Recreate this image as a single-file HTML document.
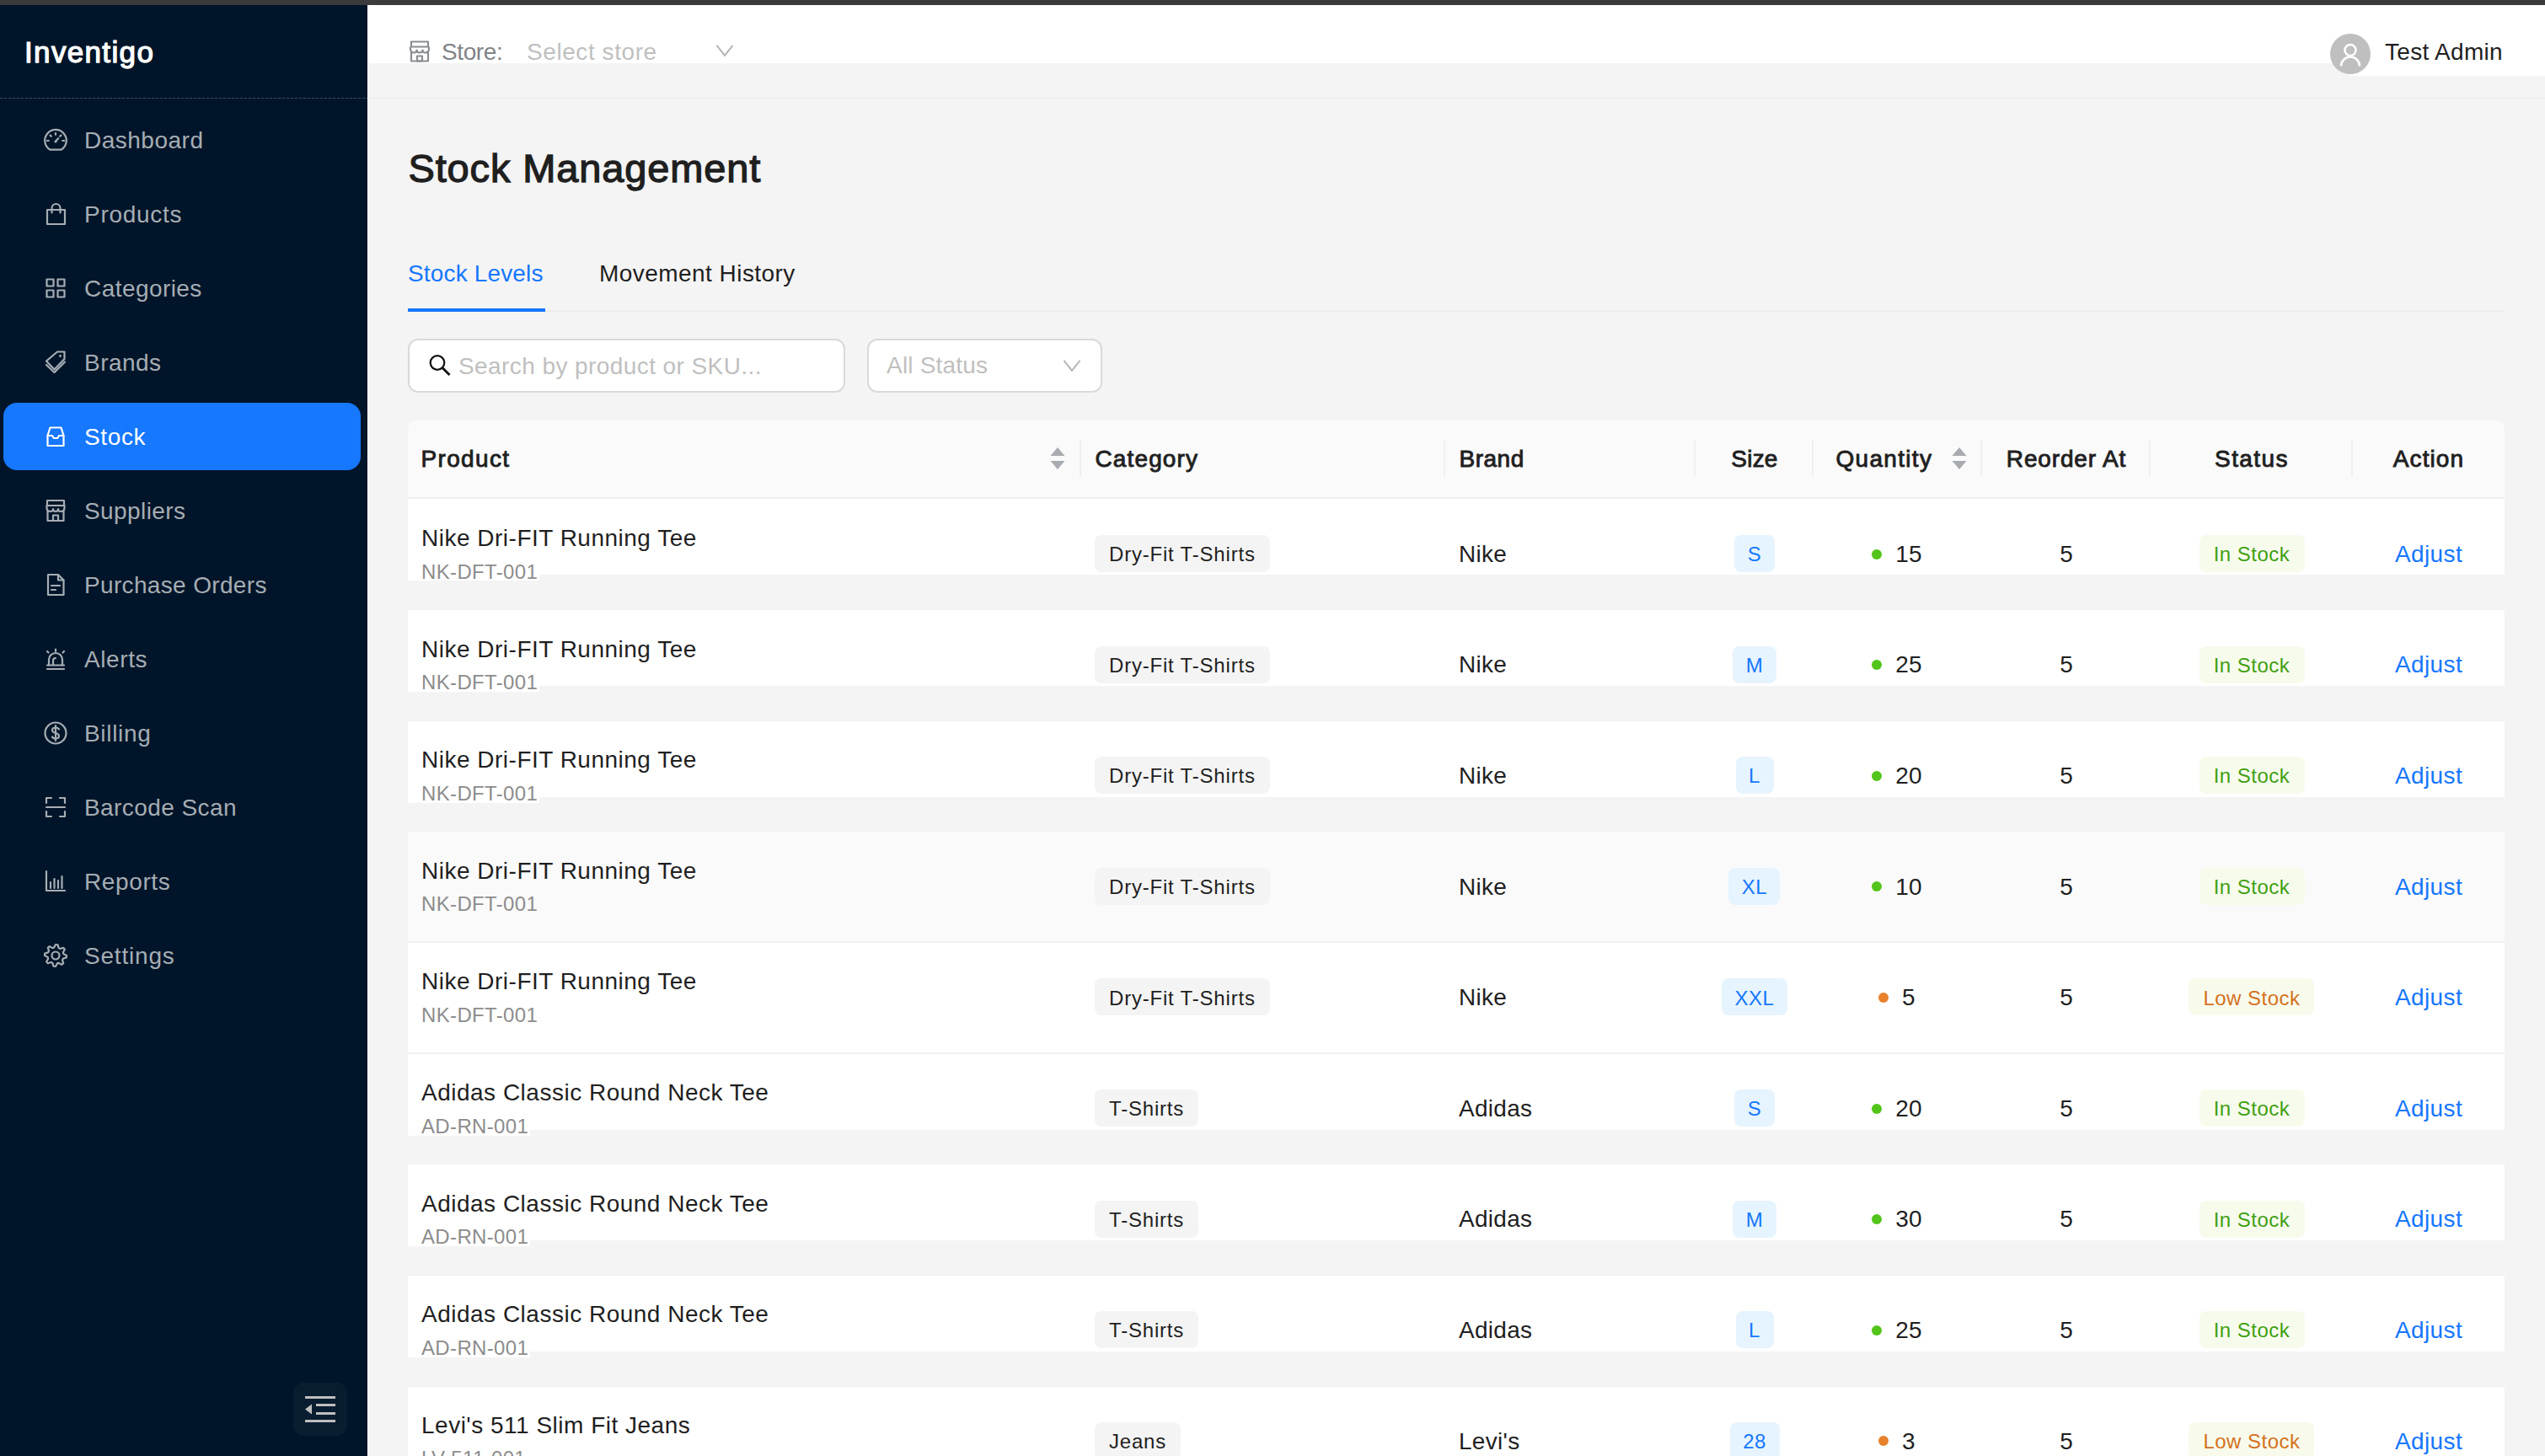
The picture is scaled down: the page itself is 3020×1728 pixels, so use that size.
<!DOCTYPE html>
<html><head><meta charset="utf-8"><title>Inventigo - Stock Management</title>
<style>
html,body{margin:0;padding:0;}
body{width:3020px;height:1728px;overflow:hidden;position:relative;background:#f4f4f4;font-family:"Liberation Sans", sans-serif;}
.t{position:absolute;white-space:nowrap;}
.b{position:absolute;}
.s{position:absolute;overflow:visible;}
</style></head>
<body>
<div class="b" style="left:0px;top:0px;width:3020px;height:6px;background:#3b3b3d;"></div>
<div class="b" style="left:0px;top:6px;width:436px;height:1722px;background:#001529;"></div>
<div class="b" style="left:436px;top:6px;width:1px;height:1722px;background:#ffffff;"></div>
<div class="b" style="left:437px;top:6px;width:2583px;height:69px;background:#ffffff;"></div>
<div class="b" style="left:2788px;top:75px;width:232px;height:15px;background:#ffffff;"></div>
<div class="b" style="left:437px;top:116px;width:2583px;height:1px;background:#ebebeb;"></div>
<div class="b" style="left:0px;top:116px;width:436px;height:1px;background:repeating-linear-gradient(90deg,#3c4756 0 3px,#142234 3px 5px);"></div>
<div class="t " style="left:29px;top:43.97px;font-size:35px;line-height:35px;color:#ffffff;letter-spacing:1.35px;-webkit-text-stroke:1.25px #ffffff;">Inventigo</div>
<div class="b" style="left:4px;top:478px;width:424px;height:80px;background:#1677ff;border-radius:16px;"></div>
<svg class="s" style="left:50px;top:150px;" width="32" height="32" viewBox="0 0 32 32"><path fill="none" stroke="#a6adb4" stroke-width="2.2" stroke-linecap="round" stroke-linejoin="round" d="M9.2 27.6 A12.8 12.8 0 1 1 22.8 27.6 Z"/><path fill="none" stroke="#a6adb4" stroke-width="2.2" stroke-linecap="round" stroke-linejoin="round" d="M16 8.2v1.6M5.8 17h2M24.2 17h2M9.6 10.6l1.2 1.2M22.4 10.6l-1.2 1.2M16 17.8l3.2-3.6"/><circle cx="16" cy="18" r="1.6" fill="#a6adb4"/></svg>
<div class="t " style="left:100px;top:152.80px;font-size:28px;line-height:28px;color:#a6adb4;letter-spacing:0.5px;">Dashboard</div>
<svg class="s" style="left:50px;top:238px;" width="32" height="32" viewBox="0 0 32 32"><rect fill="none" stroke="#a6adb4" stroke-width="2.2" stroke-linecap="round" stroke-linejoin="round" x="6" y="11" width="21" height="17"/><path fill="none" stroke="#a6adb4" stroke-width="2.2" stroke-linecap="round" stroke-linejoin="round" d="M11.5 14.5V9a5 5 0 0 1 10 0v5.5"/></svg>
<div class="t " style="left:100px;top:240.80px;font-size:28px;line-height:28px;color:#a6adb4;letter-spacing:0.71px;">Products</div>
<svg class="s" style="left:50px;top:326px;" width="32" height="32" viewBox="0 0 32 32"><rect fill="none" stroke="#a6adb4" stroke-width="2.2" stroke-linecap="round" stroke-linejoin="round" x="5.5" y="5.5" width="8" height="8"/><rect fill="none" stroke="#a6adb4" stroke-width="2.2" stroke-linecap="round" stroke-linejoin="round" x="5.5" y="18.5" width="8" height="8"/><rect fill="none" stroke="#a6adb4" stroke-width="2.2" stroke-linecap="round" stroke-linejoin="round" x="18.5" y="5.5" width="8" height="8"/><rect fill="none" stroke="#a6adb4" stroke-width="2.2" stroke-linecap="round" stroke-linejoin="round" x="18.5" y="18.5" width="8" height="8"/></svg>
<div class="t " style="left:100px;top:328.80px;font-size:28px;line-height:28px;color:#a6adb4;letter-spacing:0.44px;">Categories</div>
<svg class="s" style="left:50px;top:414px;" width="32" height="32" viewBox="0 0 32 32"><path fill="none" stroke="#a6adb4" stroke-width="2.2" stroke-linecap="round" stroke-linejoin="round" d="M5 14.5 L18 3.5 L26.5 3.5 L26.5 12 L14.5 24.5 Z"/><path fill="none" stroke="#a6adb4" stroke-width="2.2" stroke-linecap="round" stroke-linejoin="round" d="M5 19 L14.5 28 L27 15.5"/><circle cx="21.5" cy="8.5" r="1.4" fill="#a6adb4"/></svg>
<div class="t " style="left:100px;top:416.80px;font-size:28px;line-height:28px;color:#a6adb4;letter-spacing:0.48px;">Brands</div>
<svg class="s" style="left:50px;top:502px;" width="32" height="32" viewBox="0 0 32 32"><path fill="none" stroke="#ffffff" stroke-width="2.2" stroke-linecap="round" stroke-linejoin="round" d="M6.5 15 L9.5 5.5 H22.5 L25.5 15 V27 H6.5 Z"/><path fill="none" stroke="#ffffff" stroke-width="2.2" stroke-linecap="round" stroke-linejoin="round" d="M6.5 15 H12 L13.8 18 H18.2 L20 15 H25.5"/></svg>
<div class="t " style="left:100px;top:504.80px;font-size:28px;line-height:28px;color:#ffffff;letter-spacing:0.62px;">Stock</div>
<svg class="s" style="left:50px;top:590px;" width="32" height="32" viewBox="0 0 32 32"><rect fill="none" stroke="#a6adb4" stroke-width="2.2" stroke-linecap="round" stroke-linejoin="round" x="6" y="4" width="20" height="6"/><path fill="none" stroke="#a6adb4" stroke-width="2.2" stroke-linecap="round" stroke-linejoin="round" d="M5.5 10 V12.5 Q5.5 17 10 17 Q13 17 13 14 Q13 17 16 17 Q19 17 19 14 Q19 17 22 17 Q26.5 17 26.5 12.5 V10"/><path fill="none" stroke="#a6adb4" stroke-width="2.2" stroke-linecap="round" stroke-linejoin="round" d="M6.5 16.5 V28 H25.5 V16.5"/><rect fill="none" stroke="#a6adb4" stroke-width="2.2" stroke-linecap="round" stroke-linejoin="round" x="13" y="21.5" width="6" height="6.5"/></svg>
<div class="t " style="left:100px;top:592.80px;font-size:28px;line-height:28px;color:#a6adb4;letter-spacing:0.41px;">Suppliers</div>
<svg class="s" style="left:50px;top:678px;" width="32" height="32" viewBox="0 0 32 32"><path fill="none" stroke="#a6adb4" stroke-width="2.2" stroke-linecap="round" stroke-linejoin="round" d="M7 4 H19 L25.5 10.5 V28 H7 Z"/><path fill="none" stroke="#a6adb4" stroke-width="2.2" stroke-linecap="round" stroke-linejoin="round" d="M19 4 V10.5 H25.5"/><path fill="none" stroke="#a6adb4" stroke-width="2.2" stroke-linecap="round" stroke-linejoin="round" d="M11 17 H21 M11 22 H16"/></svg>
<div class="t " style="left:100px;top:680.80px;font-size:28px;line-height:28px;color:#a6adb4;letter-spacing:0.34px;">Purchase Orders</div>
<svg class="s" style="left:50px;top:766px;" width="32" height="32" viewBox="0 0 32 32"><path fill="none" stroke="#a6adb4" stroke-width="2.2" stroke-linecap="round" stroke-linejoin="round" d="M8 23.5 V17 a8 8 0 0 1 16 0 V23.5"/><path fill="none" stroke="#a6adb4" stroke-width="2.2" stroke-linecap="round" stroke-linejoin="round" d="M6 28 H26 M6 23.5 H26"/><path fill="none" stroke="#a6adb4" stroke-width="2.2" stroke-linecap="round" stroke-linejoin="round" d="M16 4.5 V7 M6 7 l1.5 1.5 M26 7 l-1.5 1.5 M13 23 v-5 a3 3 0 0 1 3-3"/></svg>
<div class="t " style="left:100px;top:768.80px;font-size:28px;line-height:28px;color:#a6adb4;letter-spacing:0.6px;">Alerts</div>
<svg class="s" style="left:50px;top:854px;" width="32" height="32" viewBox="0 0 32 32"><circle fill="none" stroke="#a6adb4" stroke-width="2.2" stroke-linecap="round" stroke-linejoin="round" cx="16" cy="16" r="12.5"/><path fill="none" stroke="#a6adb4" stroke-width="2.2" stroke-linecap="round" stroke-linejoin="round" d="M20 11.5 Q19 9.5 16 9.5 Q12 9.5 12 12.5 Q12 15 16 16 Q20 17 20 19.5 Q20 22.5 16 22.5 Q13 22.5 12 20.5 M16 7 V25"/></svg>
<div class="t " style="left:100px;top:856.80px;font-size:28px;line-height:28px;color:#a6adb4;letter-spacing:0.67px;">Billing</div>
<svg class="s" style="left:50px;top:942px;" width="32" height="32" viewBox="0 0 32 32"><path fill="none" stroke="#a6adb4" stroke-width="2.2" stroke-linecap="round" stroke-linejoin="round" d="M5 11 V5 H11 M21 5 H27 V11 M27 21 V27 H21 M11 27 H5 V21 M5 16 H27"/></svg>
<div class="t " style="left:100px;top:944.80px;font-size:28px;line-height:28px;color:#a6adb4;letter-spacing:0.43px;">Barcode Scan</div>
<svg class="s" style="left:50px;top:1030px;" width="32" height="32" viewBox="0 0 32 32"><path fill="none" stroke="#a6adb4" stroke-width="2.2" stroke-linecap="round" stroke-linejoin="round" d="M5 4 V27 H27"/><path fill="none" stroke="#a6adb4" stroke-width="2.2" stroke-linecap="round" stroke-linejoin="round" stroke-width="2.6" d="M10 24 V17 M14.5 24 V13 M19 24 V15 M23.5 24 V10"/></svg>
<div class="t " style="left:100px;top:1032.80px;font-size:28px;line-height:28px;color:#a6adb4;letter-spacing:0.62px;">Reports</div>
<svg class="s" style="left:50px;top:1118px;" width="32" height="32" viewBox="0 0 32 32"><polygon fill="none" stroke="#a6adb4" stroke-width="2.2" stroke-linecap="round" stroke-linejoin="round" points="16.00,3.00 18.54,3.25 19.67,7.13 21.33,8.02 25.19,6.81 26.81,8.78 24.87,12.33 25.42,14.13 29.00,16.00 28.75,18.54 24.87,19.67 23.98,21.33 25.19,25.19 23.22,26.81 19.67,24.87 17.87,25.42 16.00,29.00 13.46,28.75 12.33,24.87 10.67,23.98 6.81,25.19 5.19,23.22 7.13,19.67 6.58,17.87 3.00,16.00 3.25,13.46 7.13,12.33 8.02,10.67 6.81,6.81 8.78,5.19 12.33,7.13 14.13,6.58"/><circle fill="none" stroke="#a6adb4" stroke-width="2.2" stroke-linecap="round" stroke-linejoin="round" cx="16" cy="16" r="4.5"/></svg>
<div class="t " style="left:100px;top:1120.80px;font-size:28px;line-height:28px;color:#a6adb4;letter-spacing:0.8px;">Settings</div>
<div class="b" style="left:348px;top:1641px;width:64px;height:63px;background:rgba(255,255,255,0.035);border-radius:12px;"></div>
<svg class="s" style="left:362px;top:1656px;" width="36" height="33" viewBox="0 0 36 33"><path fill="#bfbfbf" d="M0 1h36v3H0zM13 10h23v3H13zM13 20h23v3H13zM0 29h36v3H0zM0 16.5 L8 10.5 V22.5 Z"/></svg>
<svg class="s" style="left:485px;top:48px;" width="26" height="26" viewBox="0 0 26 26"><g fill="none" stroke="#8a8d91" stroke-width="2.2" stroke-linejoin="round"><rect x="3" y="1.5" width="20" height="6"/><path d="M2 7.5 V10 Q2 14.5 6.5 14.5 Q9.5 14.5 9.5 11.5 Q9.5 14.5 13 14.5 Q16.5 14.5 16.5 11.5 Q16.5 14.5 19.5 14.5 Q24 14.5 24 10 V7.5"/><path d="M3 14 V24.5 H23 V14"/><rect x="10" y="18.5" width="6" height="6"/></g></svg>
<div class="t " style="left:524px;top:48.30px;font-size:28px;line-height:28px;color:#808387;letter-spacing:-0.4px;">Store:</div>
<div class="t " style="left:625px;top:47.80px;font-size:28px;line-height:28px;color:#bfbfbf;letter-spacing:0.57px;">Select store</div>
<svg class="s" style="left:849px;top:53px;" width="22" height="15" viewBox="0 0 22 15"><path fill="none" stroke="#b5b5b5" stroke-width="2" d="M1.5 0.8 L11 12.8 L20.5 0.8"/></svg>
<div class="b" style="left:2765px;top:40px;width:48px;height:48px;border-radius:50%;background:#bfbfbf;"></div>
<svg class="s" style="left:2765px;top:40px;" width="48" height="48" viewBox="0 0 48 48"><g fill="none" stroke="#fff" stroke-width="2.6"><circle cx="24" cy="19.5" r="6.5"/><path d="M13 38.5 a11 11 0 0 1 22 0"/></g></svg>
<div class="t " style="left:2830px;top:48.30px;font-size:28px;line-height:28px;color:#1f1f1f;letter-spacing:0.3px;">Test Admin</div>
<div class="t " style="left:484.5px;top:176.21px;font-size:47px;line-height:47px;color:#1f1f1f;letter-spacing:0.85px;-webkit-text-stroke:1.3px #1f1f1f;">Stock Management</div>
<div class="t " style="left:484px;top:310.50px;font-size:28px;line-height:28px;color:#1677ff;letter-spacing:0.15px;">Stock Levels</div>
<div class="t " style="left:711px;top:310.50px;font-size:28px;line-height:28px;color:#1f1f1f;letter-spacing:0.45px;">Movement History</div>
<div class="b" style="left:484px;top:368px;width:2488px;height:2px;background:#ededed;"></div>
<div class="b" style="left:484px;top:366px;width:163px;height:4px;background:#1677ff;"></div>
<div class="b" style="left:484px;top:402px;width:519px;height:64px;box-sizing:border-box;border:2px solid #d9d9d9;border-radius:12px;background:#fff;"></div>
<svg class="s" style="left:506px;top:418px;" width="32" height="32" viewBox="0 0 32 32"><g fill="none" stroke="#111" stroke-width="2.2"><circle cx="13" cy="12.5" r="8.3"/><path stroke-width="2.8" d="M19 18.5 L27.5 27"/></g></svg>
<div class="t " style="left:544px;top:420.80px;font-size:28px;line-height:28px;color:#bfbfbf;letter-spacing:0.42px;">Search by product or SKU...</div>
<div class="b" style="left:1029px;top:402px;width:279px;height:64px;box-sizing:border-box;border:2px solid #d9d9d9;border-radius:12px;background:#fff;"></div>
<div class="t " style="left:1052px;top:420.00px;font-size:28px;line-height:28px;color:#bfbfbf;letter-spacing:0.2px;">All Status</div>
<svg class="s" style="left:1261px;top:427px;" width="22" height="15" viewBox="0 0 22 15"><path fill="none" stroke="#b5b5b5" stroke-width="2" d="M1.5 0.8 L11 12.8 L20.5 0.8"/></svg>
<div class="b" style="left:484px;top:498px;width:2488px;height:92px;background:#fafafa;border-radius:12px 12px 0 0;"></div>
<div class="b" style="left:484px;top:590px;width:2488px;height:2px;background:#f0f0f0;"></div>
<div class="b" style="left:1281px;top:522px;width:2px;height:44px;background:#f0f0f0;"></div>
<div class="b" style="left:1713px;top:522px;width:2px;height:44px;background:#f0f0f0;"></div>
<div class="b" style="left:2010px;top:522px;width:2px;height:44px;background:#f0f0f0;"></div>
<div class="b" style="left:2150px;top:522px;width:2px;height:44px;background:#f0f0f0;"></div>
<div class="b" style="left:2350px;top:522px;width:2px;height:44px;background:#f0f0f0;"></div>
<div class="b" style="left:2550px;top:522px;width:2px;height:44px;background:#f0f0f0;"></div>
<div class="b" style="left:2790px;top:522px;width:2px;height:44px;background:#f0f0f0;"></div>
<div class="t " style="left:499.5px;top:531.30px;font-size:28px;line-height:28px;color:#1f1f1f;letter-spacing:1.35px;-webkit-text-stroke:0.9px #1f1f1f;">Product</div>
<div class="t " style="left:1299.5px;top:531.30px;font-size:28px;line-height:28px;color:#1f1f1f;letter-spacing:1.13px;-webkit-text-stroke:0.9px #1f1f1f;">Category</div>
<div class="t " style="left:1731.5px;top:531.30px;font-size:28px;line-height:28px;color:#1f1f1f;letter-spacing:0.5px;-webkit-text-stroke:0.9px #1f1f1f;">Brand</div>
<div class="t" style="left:1782px;width:600px;text-align:center;top:531.30px;font-size:28px;line-height:28px;color:#1f1f1f;letter-spacing:0.2px;-webkit-text-stroke:0.9px #1f1f1f;">Size</div>
<div class="t " style="left:2178.5px;top:531.30px;font-size:28px;line-height:28px;color:#1f1f1f;letter-spacing:1.3px;-webkit-text-stroke:0.9px #1f1f1f;">Quantity</div>
<div class="t" style="left:2152px;width:600px;text-align:center;top:531.30px;font-size:28px;line-height:28px;color:#1f1f1f;letter-spacing:0.85px;-webkit-text-stroke:0.9px #1f1f1f;">Reorder At</div>
<div class="t" style="left:2372px;width:600px;text-align:center;top:531.30px;font-size:28px;line-height:28px;color:#1f1f1f;letter-spacing:1.4px;-webkit-text-stroke:0.9px #1f1f1f;">Status</div>
<div class="t" style="left:2582px;width:600px;text-align:center;top:531.30px;font-size:28px;line-height:28px;color:#1f1f1f;letter-spacing:1.1px;-webkit-text-stroke:0.9px #1f1f1f;">Action</div>
<svg class="s" style="left:1246px;top:530px;" width="18" height="28" viewBox="0 0 18 28"><path fill="#a8abb0" d="M0.5 11 L9 1 L17.5 11 Z M0.5 17 L9 27 L17.5 17 Z"/></svg>
<svg class="s" style="left:2316px;top:530px;" width="18" height="28" viewBox="0 0 18 28"><path fill="#a8abb0" d="M0.5 11 L9 1 L17.5 11 Z M0.5 17 L9 27 L17.5 17 Z"/></svg>
<div class="b" style="left:484px;top:592px;width:2488px;height:90px;background:#ffffff;"></div>
<div class="b" style="left:484px;top:682px;width:2488px;height:42px;background:#f4f4f4;"></div>
<div class="b" style="left:484px;top:681px;width:156px;height:8px;background:#ffffff;"></div>
<div class="b" style="left:484px;top:723px;width:2488px;height:1px;background:#efefef;"></div>
<div class="t " style="left:500px;top:624.90px;font-size:28px;line-height:28px;color:#1f1f1f;letter-spacing:0.5px;">Nike Dri-FIT Running Tee</div>
<div class="t " style="left:500px;top:666.68px;font-size:24px;line-height:24px;color:#8c8c8c;letter-spacing:0.35px;">NK-DFT-001</div>
<div class="b" style="left:1299px;top:635px;width:208px;height:44px;background:#f4f4f4;border-radius:8px;"></div>
<div class="t " style="left:1316px;top:646.28px;font-size:24px;line-height:24px;color:#1f1f1f;letter-spacing:0.8px;">Dry-Fit T-Shirts</div>
<div class="t " style="left:1731px;top:643.80px;font-size:28px;line-height:28px;color:#1f1f1f;letter-spacing:0.3px;">Nike</div>
<div class="b" style="left:2058px;top:635px;width:48px;height:44px;background:#e6f4ff;border-radius:8px;"></div>
<div class="t" style="left:1782px;width:600px;text-align:center;top:646.28px;font-size:24px;line-height:24px;color:#1677ff;letter-spacing:0.5px;">S</div>
<div class="b" style="left:2221.2px;top:651.5px;width:12px;height:12px;border-radius:50%;background:#52c41a;"></div>
<div class="t " style="left:2249.2px;top:643.80px;font-size:28px;line-height:28px;color:#1f1f1f;letter-spacing:0.2px;">15</div>
<div class="t" style="left:2152px;width:600px;text-align:center;top:643.80px;font-size:28px;line-height:28px;color:#1f1f1f;">5</div>
<div class="b" style="left:2610px;top:635px;width:125px;height:44px;background:#f7fbec;border-radius:8px;"></div>
<div class="t" style="left:2372px;width:600px;text-align:center;top:646.28px;font-size:24px;line-height:24px;color:#3f9f12;letter-spacing:0.5px;">In Stock</div>
<div class="t" style="left:2582px;width:600px;text-align:center;top:643.80px;font-size:28px;line-height:28px;color:#1677ff;letter-spacing:0.4px;">Adjust</div>
<div class="b" style="left:484px;top:724px;width:2488px;height:90px;background:#ffffff;"></div>
<div class="b" style="left:484px;top:814px;width:2488px;height:42px;background:#f4f4f4;"></div>
<div class="b" style="left:484px;top:813px;width:156px;height:8px;background:#ffffff;"></div>
<div class="b" style="left:484px;top:855px;width:2488px;height:1px;background:#efefef;"></div>
<div class="t " style="left:500px;top:756.50px;font-size:28px;line-height:28px;color:#1f1f1f;letter-spacing:0.5px;">Nike Dri-FIT Running Tee</div>
<div class="t " style="left:500px;top:798.28px;font-size:24px;line-height:24px;color:#8c8c8c;letter-spacing:0.35px;">NK-DFT-001</div>
<div class="b" style="left:1299px;top:767px;width:208px;height:44px;background:#f4f4f4;border-radius:8px;"></div>
<div class="t " style="left:1316px;top:777.88px;font-size:24px;line-height:24px;color:#1f1f1f;letter-spacing:0.8px;">Dry-Fit T-Shirts</div>
<div class="t " style="left:1731px;top:775.40px;font-size:28px;line-height:28px;color:#1f1f1f;letter-spacing:0.3px;">Nike</div>
<div class="b" style="left:2056px;top:767px;width:52px;height:44px;background:#e6f4ff;border-radius:8px;"></div>
<div class="t" style="left:1782px;width:600px;text-align:center;top:777.88px;font-size:24px;line-height:24px;color:#1677ff;letter-spacing:0.5px;">M</div>
<div class="b" style="left:2221.2px;top:783.1px;width:12px;height:12px;border-radius:50%;background:#52c41a;"></div>
<div class="t " style="left:2249.2px;top:775.40px;font-size:28px;line-height:28px;color:#1f1f1f;letter-spacing:0.2px;">25</div>
<div class="t" style="left:2152px;width:600px;text-align:center;top:775.40px;font-size:28px;line-height:28px;color:#1f1f1f;">5</div>
<div class="b" style="left:2610px;top:767px;width:125px;height:44px;background:#f7fbec;border-radius:8px;"></div>
<div class="t" style="left:2372px;width:600px;text-align:center;top:777.88px;font-size:24px;line-height:24px;color:#3f9f12;letter-spacing:0.5px;">In Stock</div>
<div class="t" style="left:2582px;width:600px;text-align:center;top:775.40px;font-size:28px;line-height:28px;color:#1677ff;letter-spacing:0.4px;">Adjust</div>
<div class="b" style="left:484px;top:856px;width:2488px;height:90px;background:#ffffff;"></div>
<div class="b" style="left:484px;top:946px;width:2488px;height:42px;background:#f4f4f4;"></div>
<div class="b" style="left:484px;top:945px;width:156px;height:8px;background:#ffffff;"></div>
<div class="b" style="left:484px;top:987px;width:2488px;height:1px;background:#efefef;"></div>
<div class="t " style="left:500px;top:888.10px;font-size:28px;line-height:28px;color:#1f1f1f;letter-spacing:0.5px;">Nike Dri-FIT Running Tee</div>
<div class="t " style="left:500px;top:929.88px;font-size:24px;line-height:24px;color:#8c8c8c;letter-spacing:0.35px;">NK-DFT-001</div>
<div class="b" style="left:1299px;top:898px;width:208px;height:44px;background:#f4f4f4;border-radius:8px;"></div>
<div class="t " style="left:1316px;top:909.48px;font-size:24px;line-height:24px;color:#1f1f1f;letter-spacing:0.8px;">Dry-Fit T-Shirts</div>
<div class="t " style="left:1731px;top:907.00px;font-size:28px;line-height:28px;color:#1f1f1f;letter-spacing:0.3px;">Nike</div>
<div class="b" style="left:2060px;top:898px;width:45px;height:44px;background:#e6f4ff;border-radius:8px;"></div>
<div class="t" style="left:1782px;width:600px;text-align:center;top:909.48px;font-size:24px;line-height:24px;color:#1677ff;letter-spacing:0.5px;">L</div>
<div class="b" style="left:2221.2px;top:914.7px;width:12px;height:12px;border-radius:50%;background:#52c41a;"></div>
<div class="t " style="left:2249.2px;top:907.00px;font-size:28px;line-height:28px;color:#1f1f1f;letter-spacing:0.2px;">20</div>
<div class="t" style="left:2152px;width:600px;text-align:center;top:907.00px;font-size:28px;line-height:28px;color:#1f1f1f;">5</div>
<div class="b" style="left:2610px;top:898px;width:125px;height:44px;background:#f7fbec;border-radius:8px;"></div>
<div class="t" style="left:2372px;width:600px;text-align:center;top:909.48px;font-size:24px;line-height:24px;color:#3f9f12;letter-spacing:0.5px;">In Stock</div>
<div class="t" style="left:2582px;width:600px;text-align:center;top:907.00px;font-size:28px;line-height:28px;color:#1677ff;letter-spacing:0.4px;">Adjust</div>
<div class="b" style="left:484px;top:987px;width:2488px;height:130px;background:#fafafa;"></div>
<div class="b" style="left:484px;top:1117px;width:2488px;height:2px;background:#f0f0f0;"></div>
<div class="t " style="left:500px;top:1019.70px;font-size:28px;line-height:28px;color:#1f1f1f;letter-spacing:0.5px;">Nike Dri-FIT Running Tee</div>
<div class="t " style="left:500px;top:1061.48px;font-size:24px;line-height:24px;color:#8c8c8c;letter-spacing:0.35px;">NK-DFT-001</div>
<div class="b" style="left:1299px;top:1030px;width:208px;height:44px;background:#f4f4f4;border-radius:8px;"></div>
<div class="t " style="left:1316px;top:1041.08px;font-size:24px;line-height:24px;color:#1f1f1f;letter-spacing:0.8px;">Dry-Fit T-Shirts</div>
<div class="t " style="left:1731px;top:1038.60px;font-size:28px;line-height:28px;color:#1f1f1f;letter-spacing:0.3px;">Nike</div>
<div class="b" style="left:2051px;top:1030px;width:61px;height:44px;background:#e6f4ff;border-radius:8px;"></div>
<div class="t" style="left:1782px;width:600px;text-align:center;top:1041.08px;font-size:24px;line-height:24px;color:#1677ff;letter-spacing:0.5px;">XL</div>
<div class="b" style="left:2221.2px;top:1046.3px;width:12px;height:12px;border-radius:50%;background:#52c41a;"></div>
<div class="t " style="left:2249.2px;top:1038.60px;font-size:28px;line-height:28px;color:#1f1f1f;letter-spacing:0.2px;">10</div>
<div class="t" style="left:2152px;width:600px;text-align:center;top:1038.60px;font-size:28px;line-height:28px;color:#1f1f1f;">5</div>
<div class="b" style="left:2610px;top:1030px;width:125px;height:44px;background:#f7fbec;border-radius:8px;"></div>
<div class="t" style="left:2372px;width:600px;text-align:center;top:1041.08px;font-size:24px;line-height:24px;color:#3f9f12;letter-spacing:0.5px;">In Stock</div>
<div class="t" style="left:2582px;width:600px;text-align:center;top:1038.60px;font-size:28px;line-height:28px;color:#1677ff;letter-spacing:0.4px;">Adjust</div>
<div class="b" style="left:484px;top:1119px;width:2488px;height:130px;background:#ffffff;"></div>
<div class="b" style="left:484px;top:1249px;width:2488px;height:2px;background:#f0f0f0;"></div>
<div class="t " style="left:500px;top:1151.30px;font-size:28px;line-height:28px;color:#1f1f1f;letter-spacing:0.5px;">Nike Dri-FIT Running Tee</div>
<div class="t " style="left:500px;top:1193.08px;font-size:24px;line-height:24px;color:#8c8c8c;letter-spacing:0.35px;">NK-DFT-001</div>
<div class="b" style="left:1299px;top:1161px;width:208px;height:44px;background:#f4f4f4;border-radius:8px;"></div>
<div class="t " style="left:1316px;top:1172.68px;font-size:24px;line-height:24px;color:#1f1f1f;letter-spacing:0.8px;">Dry-Fit T-Shirts</div>
<div class="t " style="left:1731px;top:1170.20px;font-size:28px;line-height:28px;color:#1f1f1f;letter-spacing:0.3px;">Nike</div>
<div class="b" style="left:2043px;top:1161px;width:78px;height:44px;background:#e6f4ff;border-radius:8px;"></div>
<div class="t" style="left:1782px;width:600px;text-align:center;top:1172.68px;font-size:24px;line-height:24px;color:#1677ff;letter-spacing:0.5px;">XXL</div>
<div class="b" style="left:2229.1px;top:1177.9px;width:12px;height:12px;border-radius:50%;background:#e8812c;"></div>
<div class="t " style="left:2257.1px;top:1170.20px;font-size:28px;line-height:28px;color:#1f1f1f;letter-spacing:0.2px;">5</div>
<div class="t" style="left:2152px;width:600px;text-align:center;top:1170.20px;font-size:28px;line-height:28px;color:#1f1f1f;">5</div>
<div class="b" style="left:2597px;top:1161px;width:149px;height:44px;background:#f8fbec;border-radius:8px;"></div>
<div class="t" style="left:2372px;width:600px;text-align:center;top:1172.68px;font-size:24px;line-height:24px;color:#d4711e;letter-spacing:0.5px;">Low Stock</div>
<div class="t" style="left:2582px;width:600px;text-align:center;top:1170.20px;font-size:28px;line-height:28px;color:#1677ff;letter-spacing:0.4px;">Adjust</div>
<div class="b" style="left:484px;top:1251px;width:2488px;height:90px;background:#ffffff;"></div>
<div class="b" style="left:484px;top:1341px;width:2488px;height:42px;background:#f4f4f4;"></div>
<div class="b" style="left:484px;top:1340px;width:145px;height:8px;background:#ffffff;"></div>
<div class="b" style="left:484px;top:1382px;width:2488px;height:1px;background:#efefef;"></div>
<div class="t " style="left:500px;top:1282.90px;font-size:28px;line-height:28px;color:#1f1f1f;letter-spacing:0.5px;">Adidas Classic Round Neck Tee</div>
<div class="t " style="left:500px;top:1324.68px;font-size:24px;line-height:24px;color:#8c8c8c;letter-spacing:0.35px;">AD-RN-001</div>
<div class="b" style="left:1299px;top:1293px;width:123px;height:44px;background:#f4f4f4;border-radius:8px;"></div>
<div class="t " style="left:1316px;top:1304.28px;font-size:24px;line-height:24px;color:#1f1f1f;letter-spacing:0.8px;">T-Shirts</div>
<div class="t " style="left:1731px;top:1301.80px;font-size:28px;line-height:28px;color:#1f1f1f;letter-spacing:0.3px;">Adidas</div>
<div class="b" style="left:2058px;top:1293px;width:48px;height:44px;background:#e6f4ff;border-radius:8px;"></div>
<div class="t" style="left:1782px;width:600px;text-align:center;top:1304.28px;font-size:24px;line-height:24px;color:#1677ff;letter-spacing:0.5px;">S</div>
<div class="b" style="left:2221.2px;top:1309.5px;width:12px;height:12px;border-radius:50%;background:#52c41a;"></div>
<div class="t " style="left:2249.2px;top:1301.80px;font-size:28px;line-height:28px;color:#1f1f1f;letter-spacing:0.2px;">20</div>
<div class="t" style="left:2152px;width:600px;text-align:center;top:1301.80px;font-size:28px;line-height:28px;color:#1f1f1f;">5</div>
<div class="b" style="left:2610px;top:1293px;width:125px;height:44px;background:#f7fbec;border-radius:8px;"></div>
<div class="t" style="left:2372px;width:600px;text-align:center;top:1304.28px;font-size:24px;line-height:24px;color:#3f9f12;letter-spacing:0.5px;">In Stock</div>
<div class="t" style="left:2582px;width:600px;text-align:center;top:1301.80px;font-size:28px;line-height:28px;color:#1677ff;letter-spacing:0.4px;">Adjust</div>
<div class="b" style="left:484px;top:1382px;width:2488px;height:90px;background:#ffffff;"></div>
<div class="b" style="left:484px;top:1472px;width:2488px;height:42px;background:#f4f4f4;"></div>
<div class="b" style="left:484px;top:1471px;width:145px;height:8px;background:#ffffff;"></div>
<div class="b" style="left:484px;top:1513px;width:2488px;height:1px;background:#efefef;"></div>
<div class="t " style="left:500px;top:1414.50px;font-size:28px;line-height:28px;color:#1f1f1f;letter-spacing:0.5px;">Adidas Classic Round Neck Tee</div>
<div class="t " style="left:500px;top:1456.28px;font-size:24px;line-height:24px;color:#8c8c8c;letter-spacing:0.35px;">AD-RN-001</div>
<div class="b" style="left:1299px;top:1425px;width:123px;height:44px;background:#f4f4f4;border-radius:8px;"></div>
<div class="t " style="left:1316px;top:1435.88px;font-size:24px;line-height:24px;color:#1f1f1f;letter-spacing:0.8px;">T-Shirts</div>
<div class="t " style="left:1731px;top:1433.40px;font-size:28px;line-height:28px;color:#1f1f1f;letter-spacing:0.3px;">Adidas</div>
<div class="b" style="left:2056px;top:1425px;width:52px;height:44px;background:#e6f4ff;border-radius:8px;"></div>
<div class="t" style="left:1782px;width:600px;text-align:center;top:1435.88px;font-size:24px;line-height:24px;color:#1677ff;letter-spacing:0.5px;">M</div>
<div class="b" style="left:2221.2px;top:1441.1px;width:12px;height:12px;border-radius:50%;background:#52c41a;"></div>
<div class="t " style="left:2249.2px;top:1433.40px;font-size:28px;line-height:28px;color:#1f1f1f;letter-spacing:0.2px;">30</div>
<div class="t" style="left:2152px;width:600px;text-align:center;top:1433.40px;font-size:28px;line-height:28px;color:#1f1f1f;">5</div>
<div class="b" style="left:2610px;top:1425px;width:125px;height:44px;background:#f7fbec;border-radius:8px;"></div>
<div class="t" style="left:2372px;width:600px;text-align:center;top:1435.88px;font-size:24px;line-height:24px;color:#3f9f12;letter-spacing:0.5px;">In Stock</div>
<div class="t" style="left:2582px;width:600px;text-align:center;top:1433.40px;font-size:28px;line-height:28px;color:#1677ff;letter-spacing:0.4px;">Adjust</div>
<div class="b" style="left:484px;top:1514px;width:2488px;height:90px;background:#ffffff;"></div>
<div class="b" style="left:484px;top:1604px;width:2488px;height:42px;background:#f4f4f4;"></div>
<div class="b" style="left:484px;top:1603px;width:145px;height:8px;background:#ffffff;"></div>
<div class="b" style="left:484px;top:1645px;width:2488px;height:1px;background:#efefef;"></div>
<div class="t " style="left:500px;top:1546.10px;font-size:28px;line-height:28px;color:#1f1f1f;letter-spacing:0.5px;">Adidas Classic Round Neck Tee</div>
<div class="t " style="left:500px;top:1587.88px;font-size:24px;line-height:24px;color:#8c8c8c;letter-spacing:0.35px;">AD-RN-001</div>
<div class="b" style="left:1299px;top:1556px;width:123px;height:44px;background:#f4f4f4;border-radius:8px;"></div>
<div class="t " style="left:1316px;top:1567.48px;font-size:24px;line-height:24px;color:#1f1f1f;letter-spacing:0.8px;">T-Shirts</div>
<div class="t " style="left:1731px;top:1565.00px;font-size:28px;line-height:28px;color:#1f1f1f;letter-spacing:0.3px;">Adidas</div>
<div class="b" style="left:2060px;top:1556px;width:45px;height:44px;background:#e6f4ff;border-radius:8px;"></div>
<div class="t" style="left:1782px;width:600px;text-align:center;top:1567.48px;font-size:24px;line-height:24px;color:#1677ff;letter-spacing:0.5px;">L</div>
<div class="b" style="left:2221.2px;top:1572.7px;width:12px;height:12px;border-radius:50%;background:#52c41a;"></div>
<div class="t " style="left:2249.2px;top:1565.00px;font-size:28px;line-height:28px;color:#1f1f1f;letter-spacing:0.2px;">25</div>
<div class="t" style="left:2152px;width:600px;text-align:center;top:1565.00px;font-size:28px;line-height:28px;color:#1f1f1f;">5</div>
<div class="b" style="left:2610px;top:1556px;width:125px;height:44px;background:#f7fbec;border-radius:8px;"></div>
<div class="t" style="left:2372px;width:600px;text-align:center;top:1567.48px;font-size:24px;line-height:24px;color:#3f9f12;letter-spacing:0.5px;">In Stock</div>
<div class="t" style="left:2582px;width:600px;text-align:center;top:1565.00px;font-size:28px;line-height:28px;color:#1677ff;letter-spacing:0.4px;">Adjust</div>
<div class="b" style="left:484px;top:1646px;width:2488px;height:130px;background:#ffffff;"></div>
<div class="b" style="left:484px;top:1776px;width:2488px;height:2px;background:#f0f0f0;"></div>
<div class="t " style="left:500px;top:1677.70px;font-size:28px;line-height:28px;color:#1f1f1f;letter-spacing:0.5px;">Levi's 511 Slim Fit Jeans</div>
<div class="t " style="left:500px;top:1719.48px;font-size:24px;line-height:24px;color:#8c8c8c;letter-spacing:0.35px;">LV-511-001</div>
<div class="b" style="left:1299px;top:1688px;width:102px;height:44px;background:#f4f4f4;border-radius:8px;"></div>
<div class="t " style="left:1316px;top:1699.08px;font-size:24px;line-height:24px;color:#1f1f1f;letter-spacing:0.8px;">Jeans</div>
<div class="t " style="left:1731px;top:1696.60px;font-size:28px;line-height:28px;color:#1f1f1f;letter-spacing:0.3px;">Levi's</div>
<div class="b" style="left:2053px;top:1688px;width:59px;height:44px;background:#e6f4ff;border-radius:8px;"></div>
<div class="t" style="left:1782px;width:600px;text-align:center;top:1699.08px;font-size:24px;line-height:24px;color:#1677ff;letter-spacing:0.5px;">28</div>
<div class="b" style="left:2229.1px;top:1704.3px;width:12px;height:12px;border-radius:50%;background:#e8812c;"></div>
<div class="t " style="left:2257.1px;top:1696.60px;font-size:28px;line-height:28px;color:#1f1f1f;letter-spacing:0.2px;">3</div>
<div class="t" style="left:2152px;width:600px;text-align:center;top:1696.60px;font-size:28px;line-height:28px;color:#1f1f1f;">5</div>
<div class="b" style="left:2597px;top:1688px;width:149px;height:44px;background:#f8fbec;border-radius:8px;"></div>
<div class="t" style="left:2372px;width:600px;text-align:center;top:1699.08px;font-size:24px;line-height:24px;color:#d4711e;letter-spacing:0.5px;">Low Stock</div>
<div class="t" style="left:2582px;width:600px;text-align:center;top:1696.60px;font-size:28px;line-height:28px;color:#1677ff;letter-spacing:0.4px;">Adjust</div>
</body></html>
